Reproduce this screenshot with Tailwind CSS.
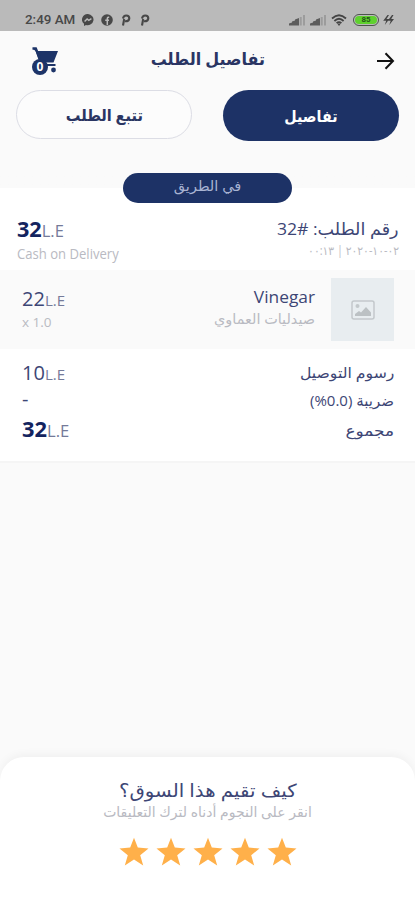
<!DOCTYPE html>
<html lang="ar" dir="rtl">
<head>
<meta charset="utf-8">
<title>تفاصيل الطلب</title>
<script src="https://cdn.jsdelivr.net/npm/@tailwindcss/browser@4"></script>
</head>
<body class="w-[415px] h-[900px] overflow-hidden bg-[#fafafa] text-[#3d4675] font-['Open_Sans','DejaVu_Sans',sans-serif]">
<div class="flex flex-col h-[900px]">
  <header dir="ltr" class="h-[31px] shrink-0 bg-[#bababa] flex items-center pl-[25px] pr-[21px] pt-2 text-[#484848] font-['Roboto',sans-serif]">
    <span class="text-[13px] font-medium leading-none w-[57px] whitespace-nowrap"><span class="inline-block origin-left scale-x-[1.03]">2:49 AM</span></span>
    <svg class="w-3 h-3" viewBox="0 0 12 12"><path fill="#484848" d="M6 0a5.800 5.600 0 0 0-4 9.800V12l2-1a6 5.600 0 1 0 2-11"/><path d="M2.600 7.400l2.500-2.500 1.700 1.400 2.600-1.600" fill="none" stroke="#bababa" stroke-width="1.400"/></svg>
    <svg class="w-3 h-3 ml-[7px]" viewBox="0 0 12 12"><circle cx="6" cy="6" r="5.800" fill="#484848"/><path d="M8.200 3.200H7.300Q6.300 3.200 6.300 4.400V11M4.200 6.300h3.800" fill="none" stroke="#bababa" stroke-width="1.500"/></svg>
    <svg class="w-[10px] h-3 ml-[8px]" viewBox="0 0 10 12"><path d="M2 11.500 3.200 5M2 4.500Q2.500 1.500 5.200 1.500 8.300 1.500 8.300 4.300 8 7.500 4 7.300" fill="none" stroke="#484848" stroke-width="2.100"/></svg>
    <svg class="w-[10px] h-3 ml-[9px]" viewBox="0 0 10 12"><path d="M2 11.500 3.200 5M2 4.500Q2.500 1.500 5.200 1.500 8.300 1.500 8.300 4.300 8 7.500 4 7.300" fill="none" stroke="#484848" stroke-width="2.100"/></svg>
    <span class="flex-1"></span>
    <svg class="w-[17px] h-3" viewBox="0 0 17 12"><path d="M0 11.500V9.500L3 8.500V7.500L6 6.500V5.500L10 4V11.500z" fill="#5c5c5c"/><path d="M10.700 11.500h2V3h-2zM14 11.500h2V1h-2z" fill="#9c9c9c"/></svg>
    <svg class="w-[17px] h-3 ml-[4px]" viewBox="0 0 17 12"><path d="M0 11.500V9.500L3 8.500V7.500L6 6.500V5.500L10 4V11.500z" fill="#5c5c5c"/><path d="M10.700 11.500h2V3h-2zM14 11.500h2V1h-2z" fill="#9c9c9c"/></svg>
    <svg class="w-4 h-3 ml-[4px]" viewBox="0 0 16 12"><path d="M1 4.500Q8-2 15 4.500M3.400 7Q8 2.500 12.600 7M5.600 9.200Q8 7 10.400 9.200" fill="none" stroke="#444" stroke-width="1.800"/><path d="M6.200 9.500h3.600L8 12z" fill="#444"/></svg>
    <div class="ml-[6px] w-[26px] h-[12px] rounded-full border border-[#4c554c] bg-[#bababa] p-px"><div class="h-full rounded-full bg-[#5fd12f] text-[8px] font-bold leading-[8px] text-center text-[#24551a]">85</div></div>
    <svg class="w-[11px] h-[10px] ml-[4px]" viewBox="0 0 11 10"><path d="M4.500 0 .2 5.800h3L1.800 10 6.300 4H3.500L6 0zM9 0 4.700 5.800h3L6.300 10l4.700-6H8.200L10.500 0z" fill="#444"/></svg>
  </header>

  <nav class="h-[59px] shrink-0 flex items-center justify-between pr-[20px] pl-[31px]">
    <svg class="w-[19px] h-[18px]" viewBox="0 0 19 18"><path d="M1 9h16M9.500 1.200 17 9l-7.500 7.800" fill="none" stroke="#111" stroke-width="2"/></svg>
    <h1 class="text-[17px] font-bold text-[#2a3563] whitespace-nowrap pr-[19px] pb-[3px]"><span class="inline-block scale-x-[.94]">تفاصيل الطلب</span></h1>
    <svg class="w-[28px] h-[28px]" viewBox="0 0 28 28"><path d="M1.500 1.500H5L6 4H27L22.500 15.500H8.500L4.500 4z" fill="#1d3468"/><path d="M1.500 1.500h3.300l4 10" fill="none" stroke="#1d3468" stroke-width="2.400"/><path d="M12 18h12.500" stroke="#1d3468" stroke-width="2"/><circle cx="22.500" cy="23" r="2.400" fill="#1d3468"/><circle cx="9" cy="20" r="8" fill="#1d3468"/><text x="9" y="24" text-anchor="middle" font-family="Open Sans" font-weight="700" font-size="12" fill="#fff">0</text></svg>
  </nav>

  <div class="h-[83px] shrink-0 flex justify-between px-4">
    <button class="w-[176px] h-[51px] rounded-full bg-[#1d3266] text-white text-[16px] font-bold"><span class="inline-block scale-x-[.89]">تفاصيل</span></button>
    <button class="w-[176px] h-[49px] rounded-full border border-[#dcdde5] bg-[#fcfcfc] text-[#2a3563] text-[16px] font-bold"><span class="inline-block scale-x-[.91]">تتبع الطلب</span></button>
  </div>

  <main class="shrink-0 h-[290px]">
    <div class="h-[30px] flex justify-center bg-linear-to-b from-[#fafafa] from-50% to-white to-50%">
      <div class="w-[169px] h-[30px] rounded-full bg-[#1d3266] text-[#a9b4d3] text-[14px] leading-[26px] text-center"><span class="inline-block scale-x-[1.04]">في الطريق</span></div>
    </div>
    <section class="h-[67px] bg-white flex justify-between pl-[17px] pr-4 pt-3">
      <div>
        <div class="text-[17px] leading-[28px] whitespace-nowrap"><span class="inline-block origin-right scale-x-[1.035]">رقم الطلب: <bdi dir="ltr">32#</bdi></span></div>
        <div dir="ltr" class="text-[12px] leading-[16px] text-right text-[#b9bac2]"><span class="inline-block origin-right scale-x-[.9]"><bdo dir="ltr">٠٠:١٣ | ٢٠٢٠-١٠-٠٢</bdo></span></div>
      </div>
      <div dir="ltr">
        <div class="leading-[28px] whitespace-nowrap"><span class="inline-block origin-left scale-x-[1.03]"><b class="text-[21px] text-[#14245f]">32</b><span class="text-[16px] text-[#747a99]">L.E</span></span></div>
        <div class="text-[14px] leading-[17px] text-[#b9bac2] whitespace-nowrap"><span class="inline-block origin-left scale-x-[.935]">Cash on Delivery</span></div>
      </div>
    </section>
    <section class="h-[79px] bg-[#fafafa] flex pl-[22px] pr-[21px] pt-[8px]">
      <div class="w-[63px] h-[63px] bg-[#e8edf0] flex items-center justify-center">
        <svg class="w-6 h-5" viewBox="0 0 24 20"><rect x="1" y="1" width="22" height="18" rx="2" fill="none" stroke="#c3c8cb" stroke-width="1.500"/><circle cx="6.500" cy="6" r="2" fill="#c3c8cb"/><path d="M4 16v-2l4-3 2 1.500L15 7l5 5.500V16z" fill="#bcc1c4"/></svg>
      </div>
      <div class="mr-4 flex-1 pt-[6px]">
        <div class="text-[17px] leading-[26px]"><span class="inline-block origin-right scale-x-[1.02]">Vinegar</span></div>
        <div class="text-[14px] leading-[18px] text-[#b9bac2]"><span class="inline-block origin-right scale-x-[1.03]">صيدليات العماوي</span></div>
      </div>
      <div dir="ltr" class="pt-[8px]">
        <div class="leading-[26px]"><span class="text-[20px]">22</span><span class="text-[15px] text-[#747a99]">L.E</span></div>
        <div class="text-[13px] leading-[18px] text-[#b9bac2]"><span class="inline-block origin-left scale-x-[1.04]">x 1.0</span></div>
      </div>
    </section>
    <section class="h-[114px] bg-white border-b-2 border-[#f5f5f5] pl-[22px] pr-[21px] pt-[9px] text-[15px]">
      <div class="h-[29px] flex justify-between items-center"><span class="origin-right scale-x-[1.045]">رسوم التوصيل</span><span dir="ltr" class="flex items-baseline"><span class="text-[20px]">10</span><span class="text-[15px] text-[#747a99]">L.E</span></span></div>
      <div class="h-[27px] flex justify-between items-center"><span>ضريبة <bdo dir="ltr">(%0.0)</bdo></span><span class="text-[20px] pb-[3px]">-</span></div>
      <div class="h-[32px] flex justify-between items-center"><span class="origin-right scale-x-[1.13]">مجموع</span><span dir="ltr" class="flex items-baseline origin-left scale-x-[1.04]"><b class="text-[21px] text-[#14245f]">32</b><span class="text-[16px] text-[#747a99]">L.E</span></span></div>
    </section>
  </main>

  <div class="flex-1"></div>

  <footer class="h-[143px] shrink-0 rounded-t-[24px] bg-white shadow-[0_-3px_8px_rgba(0,0,0,0.04)] flex flex-col items-center pt-[19px]">
    <div class="text-[18px] leading-[28px] whitespace-nowrap"><span class="inline-block scale-x-[1.1]">كيف تقيم هذا السوق؟</span></div>
    <div class="text-[14px] leading-[16px] text-[#b9bac2] whitespace-nowrap"><span class="inline-block">انقر على النجوم أدناه لترك التعليقات</span></div>
    <div class="flex gap-[7px] mt-[17px]">
      <svg class="w-[30px] h-[30px]" viewBox="0 0 30 30"><path fill="#ffb04a" d="m15 .8 3.800 9.800 10.700.8-8.300 6.800 3 10.300-9.200-5.900-9.200 5.900 3-10.300-8.300-6.800 10.700-.8z"/></svg>
      <svg class="w-[30px] h-[30px]" viewBox="0 0 30 30"><path fill="#ffb04a" d="m15 .8 3.800 9.800 10.700.8-8.300 6.800 3 10.300-9.200-5.900-9.200 5.900 3-10.300-8.300-6.800 10.700-.8z"/></svg>
      <svg class="w-[30px] h-[30px]" viewBox="0 0 30 30"><path fill="#ffb04a" d="m15 .8 3.800 9.800 10.700.8-8.300 6.800 3 10.300-9.200-5.900-9.200 5.900 3-10.300-8.300-6.800 10.700-.8z"/></svg>
      <svg class="w-[30px] h-[30px]" viewBox="0 0 30 30"><path fill="#ffb04a" d="m15 .8 3.800 9.800 10.700.8-8.300 6.800 3 10.300-9.200-5.900-9.200 5.900 3-10.300-8.300-6.800 10.700-.8z"/></svg>
      <svg class="w-[30px] h-[30px]" viewBox="0 0 30 30"><path fill="#ffb04a" d="m15 .8 3.800 9.800 10.700.8-8.300 6.800 3 10.300-9.200-5.900-9.200 5.900 3-10.300-8.300-6.800 10.700-.8z"/></svg>
    </div>
  </footer>
</div>
</body>
</html>
